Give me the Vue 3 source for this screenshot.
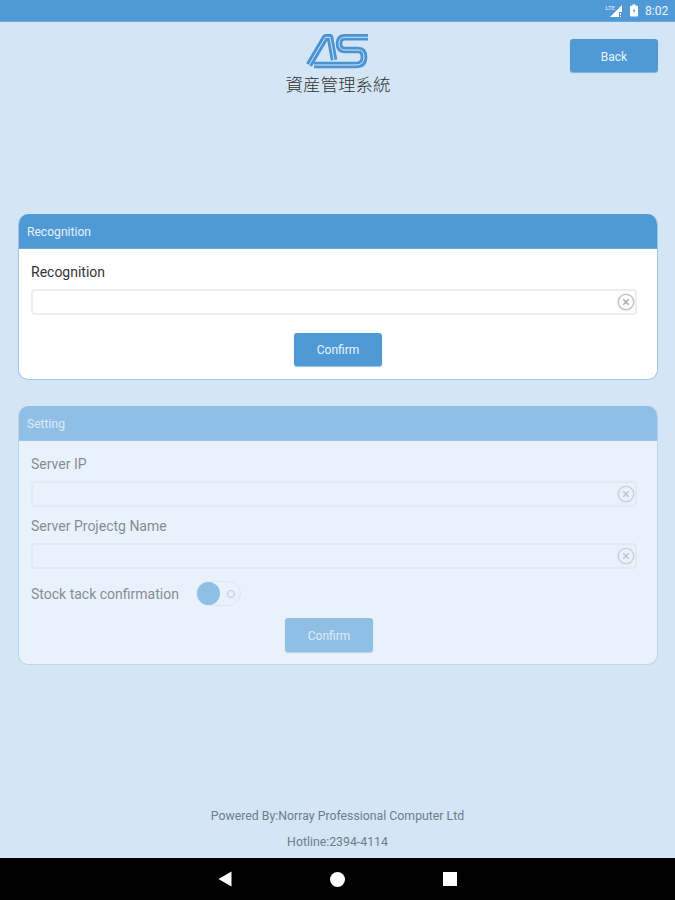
<template>
  <div class="page">
    <div class="status-bar">
      <span class="status-bar__net">LTE</span>
      <svg class="status-bar__signal" width="14" height="14" viewBox="0 0 14 14">
        <path d="M13 1 V13 H1 Z" fill="#fff" />
        <path d="M10 8 h3 v5 h-3 z" fill="#4f9ad6" />
        <path d="M11 9 h1 v2 h-1 z M11 12 h1 v1 h-1 z" fill="#fff" />
      </svg>
      <svg class="status-bar__battery" width="8" height="13" viewBox="0 0 10 15">
        <path d="M3 0 h4 v1.5 h2 a1 1 0 0 1 1 1 V14 a1 1 0 0 1 -1 1 H1 a1 1 0 0 1 -1 -1 V2.500 a1 1 0 0 1 1 -1 h2 z" fill="#fff" />
        <path d="M5.500 4 L3.500 8.500 H5 L4.500 12 L6.500 7 H5 Z" fill="#4f9ad6" />
      </svg>
      <span class="status-bar__time">8:02</span>
    </div>

    <header class="top">
      <div class="brand">
        <svg class="brand__logo" width="66" height="37" viewBox="0 0 66 37">
          <g fill="none" stroke-linejoin="round">
            <g stroke="#4a94d2" stroke-width="6.600">
              <path d="M4 33 L20.500 5.300 H25 L29 28" />
              <path d="M63 5.300 H40 Q34 5.300 34 11.500 Q34 18 40 18 H53 Q59 18 59 25 Q59 33 51 33 H9" />
            </g>
            <g stroke="#d4e5f5" stroke-width="1">
              <path d="M4 33 L20.500 5.300 H25 L29 28" />
              <path d="M63 5.300 H40 Q34 5.300 34 11.500 Q34 18 40 18 H53 Q59 18 59 25 Q59 33 51 33 H9" />
            </g>
          </g>
        </svg>
        <div class="brand__name">資産管理系統</div>
      </div>
      <button class="btn top__back" type="button">Back</button>
    </header>

    <section class="card card--first">
      <div class="card__head">Recognition</div>
      <div class="card__body">
        <label class="field-label">Recognition</label>
        <div class="input-wrap">
          <input class="input" type="text" />
          <svg class="input-wrap__clear" width="18" height="18" viewBox="0 0 18 18">
            <circle cx="9" cy="9" r="7.800" fill="#fff" stroke="#c4c4c4" stroke-width="1.600" />
            <path d="M6.300 6.300 L11.700 11.700 M11.700 6.300 L6.300 11.700" stroke="#a8a8a8" stroke-width="1.500" />
          </svg>
        </div>
        <div class="actions">
          <button class="btn" type="button">Confirm</button>
        </div>
      </div>
    </section>

    <section class="card card--disabled">
      <div class="card__head">Setting</div>
      <div class="card__body">
        <template v-for="field in settingFields" :key="field">
          <label class="field-label">{{ field }}</label>
          <div class="input-wrap">
            <input class="input" type="text" disabled />
            <svg class="input-wrap__clear" width="18" height="18" viewBox="0 0 18 18">
              <circle cx="9" cy="9" r="7.800" fill="#fff" stroke="#c4c4c4" stroke-width="1.600" />
              <path d="M6.300 6.300 L11.700 11.700 M11.700 6.300 L6.300 11.700" stroke="#a8a8a8" stroke-width="1.500" />
            </svg>
          </div>
        </template>
        <div class="switch-row">
          <span class="switch-row__label">Stock tack confirmation</span>
          <span class="switch">
            <span class="switch__knob"></span>
            <span class="switch__off"></span>
          </span>
        </div>
        <div class="actions actions--shifted">
          <button class="btn btn--tall" type="button">Confirm</button>
        </div>
      </div>
    </section>

    <footer class="foot">
      <p>Powered By:Norray Professional Computer Ltd</p>
      <p>Hotline:2394-4114</p>
    </footer>

    <nav class="nav-bar">
      <svg width="14" height="16" viewBox="0 0 14 16"><path d="M13.500 0.500 V15.500 L0.500 8 Z" fill="#fff" /></svg>
      <span class="nav-bar__home"></span>
      <span class="nav-bar__recent"></span>
    </nav>
  </div>
</template>

<script setup>
const settingFields = ['Server IP', 'Server Projectg Name'];
</script>

<style>
html,
body {
  margin: 0;
  background: #d4e5f5;
}
</style>

<style scoped>
.page {
  display: flex;
  flex-direction: column;
  width: 675px;
  height: 900px;
  overflow: hidden;
  background: #d4e5f5;
  font-family: Roboto, "Noto Sans CJK TC", sans-serif;
}

.status-bar {
  display: flex;
  align-items: center;
  justify-content: flex-end;
  box-sizing: border-box;
  height: 22px;
  flex: none;
  padding-right: 5px;
  background: #4f9ad6;
  border-bottom: 1px solid #6aa9dc;
  color: #fff;
}

.status-bar__net {
  align-self: flex-start;
  margin-top: 4px;
  margin-right: -6px;
  font-size: 6px;
  color: #e6f1fa;
}

.status-bar__signal {
  margin-right: 7px;
}

.status-bar__battery {
  margin-right: 7px;
}

.status-bar__time {
  width: 25px;
  font-size: 12px;
  color: #eef5fb;
}

.top {
  display: grid;
  grid-template-columns: 1fr auto 1fr;
  align-items: start;
  height: 192px;
  flex: none;
  padding: 0 17px 0 18px;
}

.brand {
  grid-column: 2;
  display: flex;
  flex-direction: column;
  align-items: center;
  padding-top: 10px;
}

.brand__logo {
  display: block;
}

.brand__name {
  margin-top: 5px;
  font-size: 17.500px;
  line-height: 20px;
  color: #333;
  font-family: "Noto Sans CJK TC", sans-serif;
  font-weight: 300;
}

.top__back {
  grid-column: 3;
  justify-self: end;
  margin-top: 17px;
  height: 34px;
}

.btn {
  display: block;
  width: 88px;
  height: 33px;
  padding: 1px 0 0;
  border: 0;
  border-radius: 3px;
  background: #4f9ad6;
  box-shadow: 0 1px 1px rgba(50, 120, 180, 0.5);
  color: #eaf3fb;
  font-family: inherit;
  font-size: 12px;
}

.top__back.btn {
  padding-top: 3px;
}

.btn--tall {
  height: 34px;
}

.card {
  box-sizing: border-box;
  flex: none;
  width: 640px;
  margin-left: 18px;
  overflow: hidden;
  border-radius: 10px;
  border: 1px solid #9fc5e8;
  border-top: 0;
  background: #fff;
}

.card--first {
  height: 166px;
}

.card--disabled {
  height: 259px;
  margin-top: 26px;
  opacity: 0.5;
}

.card__head {
  box-sizing: border-box;
  height: 35px;
  margin: 0 -1px;
  padding: 1px 9px 0;
  background: #4f9ad6;
  border-bottom: 1px solid #6aa9dc;
  color: #e6f1fa;
  font-size: 12.100px;
  line-height: 35px;
}

.card__body {
  display: flex;
  flex-direction: column;
  padding: 12px 20px 0 12px;
}

.field-label {
  padding-top: 1px;
  margin-bottom: -1px;
  font-size: 14px;
  line-height: 20px;
  color: #333;
}

.input-wrap {
  position: relative;
  height: 26px;
  margin: 8px 0;
}

.input {
  display: block;
  box-sizing: border-box;
  width: 100%;
  height: 26px;
  padding: 0 24px 0 6px;
  border: 2px solid #eeeeee;
  border-radius: 4px;
  background: #fff;
  outline: none;
}

.input-wrap__clear {
  position: absolute;
  top: 4px;
  right: 2px;
}

.actions {
  display: flex;
  justify-content: center;
  margin-top: 10px;
  padding-left: 8px;
}

.actions--shifted {
  margin-top: 12px;
  padding-left: 0;
  padding-right: 10px;
}

.switch-row {
  display: flex;
  align-items: center;
  margin-top: 4px;
  height: 25px;
}

.switch-row__label {
  width: 165px;
  font-size: 14px;
  color: #333;
}

.switch {
  display: flex;
  align-items: center;
  justify-content: space-between;
  box-sizing: border-box;
  width: 45px;
  height: 25px;
  padding-right: 5px;
  border: 1px solid #e6e6e6;
  border-radius: 13px;
  background: #fff;
}

.switch__knob {
  width: 23px;
  height: 23px;
  border-radius: 50%;
  background: #4f9ad6;
}

.switch__off {
  box-sizing: border-box;
  width: 8px;
  height: 8px;
  border: 1.500px solid #aaa;
  border-radius: 50%;
}

.foot {
  margin-top: auto;
  padding-bottom: 2px;
  text-align: center;
  font-size: 12.300px;
  color: #6d7d8c;
}

.foot p {
  margin: 0;
  line-height: 26px;
}

.nav-bar {
  display: grid;
  grid-template-columns: 14px 15px 14px;
  justify-content: center;
  column-gap: 98px;
  align-items: center;
  flex: none;
  height: 43px;
  background: #000;
  border-top: 1px solid #dcebf7;
  box-sizing: border-box;
}

.nav-bar svg {
  display: block;
}

.nav-bar__home {
  width: 15px;
  height: 15px;
  border-radius: 50%;
  background: #fff;
}

.nav-bar__recent {
  width: 14px;
  height: 14px;
  background: #fff;
}
</style>
